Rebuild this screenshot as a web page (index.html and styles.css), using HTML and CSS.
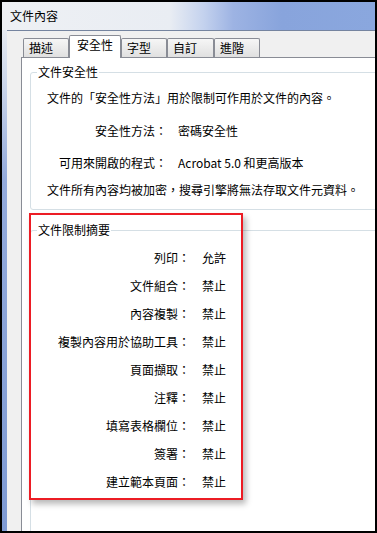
FILE: index.html
```html
<!DOCTYPE html>
<html lang="zh-Hant">
<head>
<meta charset="utf-8">
<title>文件內容</title>
<link rel="stylesheet" href="styles.css">
</head>
<body>
<div class="window">
  <div class="titlebar">文件內容</div>
  <div class="body">
    <div class="frame-left"></div>
    <div class="client">
      <div class="tabs">
        <div class="tab w46">描述</div>
        <div class="tab active">安全性</div>
        <div class="tab w46">字型</div>
        <div class="tab w47">自訂</div>
        <div class="tab w46">進階</div>
      </div>
      <div class="panel">
        <fieldset class="group g1">
          <legend>文件安全性</legend>
          <p class="line l1">文件的「安全性方法」用於限制可作用於文件的內容。</p>
          <div class="kv">
            <span class="k">安全性方法：</span><span class="v">密碼安全性</span>
            <span class="k">可用來開啟的程式：</span><span class="v">Acrobat 5.0 和更高版本</span>
          </div>
          <p class="line l4">文件所有內容均被加密，搜尋引擎將無法存取文件元資料。</p>
        </fieldset>
        <fieldset class="group g2">
          <legend>文件限制摘要</legend>
          <div class="rows">
            <span class="k">列印：</span><span class="v">允許</span>
            <span class="k">文件組合：</span><span class="v">禁止</span>
            <span class="k">內容複製：</span><span class="v">禁止</span>
            <span class="k">複製內容用於協助工具：</span><span class="v">禁止</span>
            <span class="k">頁面擷取：</span><span class="v">禁止</span>
            <span class="k">注釋：</span><span class="v">禁止</span>
            <span class="k">填寫表格欄位：</span><span class="v">禁止</span>
            <span class="k">簽署：</span><span class="v">禁止</span>
            <span class="k">建立範本頁面：</span><span class="v">禁止</span>
          </div>
        </fieldset>
      </div>
    </div>
  </div>
  <div class="highlight"></div>
</div>
</body>
</html>
```
FILE: styles.css
```css
html, body {
  margin: 0;
  padding: 0;
  background: #fff;
}

.window {
  position: relative;
  width: 377px;
  height: 533px;
  box-sizing: border-box;
  border: 2px solid #000;
  overflow: hidden;
  display: flex;
  flex-direction: column;
  font-family: "Noto Sans CJK TC", "Noto Sans", sans-serif;
  font-size: 12px;
  color: #000;
}

.titlebar {
  flex: none;
  height: 28px;
  line-height: 28px;
  padding-left: 8px;
  background: linear-gradient(90deg, #eef0f4 0%, #e9edf3 45%, #c4d2ee 54%, #9db3e3 62%, #88a4dc 75%, #8aa7de 100%);
}

.body {
  flex: 1;
  display: flex;
  min-height: 0;
}

.frame-left {
  flex: none;
  width: 5px;
  background: linear-gradient(#e6eaf1 0px, #cdd7ea 50px, #93aadb 150px, #7e9ad3 100%);
}

.client {
  flex: 1;
  min-width: 0;
  display: flex;
  flex-direction: column;
  border-top: 1px solid #75849f;
  background: #f0f0f0;
}

.tabs {
  flex: none;
  height: 26px;
  display: flex;
  align-items: flex-end;
  padding-left: 16px;
}

.tab {
  box-sizing: border-box;
  height: 19px;
  line-height: 17px;
  padding-left: 5px;
  border: 1px solid #898c95;
  border-bottom: none;
  border-radius: 2px 2px 0 0;
  background: linear-gradient(#f6f6f6, #e0e0e0);
  white-space: nowrap;
}

.w46 { width: 46px; }
.w47 { width: 47px; }

.tab.active {
  position: relative;
  z-index: 1;
  width: 52px;
  height: 23px;
  line-height: 18px;
  padding-left: 7px;
  margin-bottom: -1px;
  background: #fff;
}

.panel {
  flex: 1;
  min-height: 0;
  margin-left: 14px;
  border-left: 1px solid #898c95;
  border-top: 1px solid #898c95;
  background: #fff;
  overflow: hidden;
  padding: 6px 0 0 8px;
}

.group {
  margin: 0 -20px 0 0;
  border: 1px solid #d5dfe5;
  border-radius: 3px;
  padding: 0 0 11px 6px;
  min-width: 0;
}

.group legend {
  padding: 0 1px;
  line-height: 16px;
}

.line {
  margin: 0 0 0 10px;
  line-height: 16px;
  white-space: nowrap;
}

.l1 { margin-top: 10px; }
.l4 { margin-top: 11px; }

.kv {
  margin: 17px 0 0 10px;
  display: grid;
  grid-template-columns: 120px auto;
  column-gap: 11px;
  row-gap: 16px;
  line-height: 16px;
}

.k {
  text-align: right;
  white-space: nowrap;
}

.v {
  white-space: nowrap;
}

.g2 {
  margin-top: 12px;
  padding-bottom: 120px;
}

.rows {
  margin-top: 6px;
  display: grid;
  grid-template-columns: 153px auto;
  column-gap: 12px;
  grid-auto-rows: 28px;
  line-height: 28px;
}

.highlight {
  position: absolute;
  left: 27px;
  top: 211px;
  width: 214px;
  height: 287px;
  box-sizing: border-box;
  border: 2px solid #ec1c24;
  box-shadow: 3px 4px 6px rgba(0, 0, 0, 0.28);
  pointer-events: none;
}
```
